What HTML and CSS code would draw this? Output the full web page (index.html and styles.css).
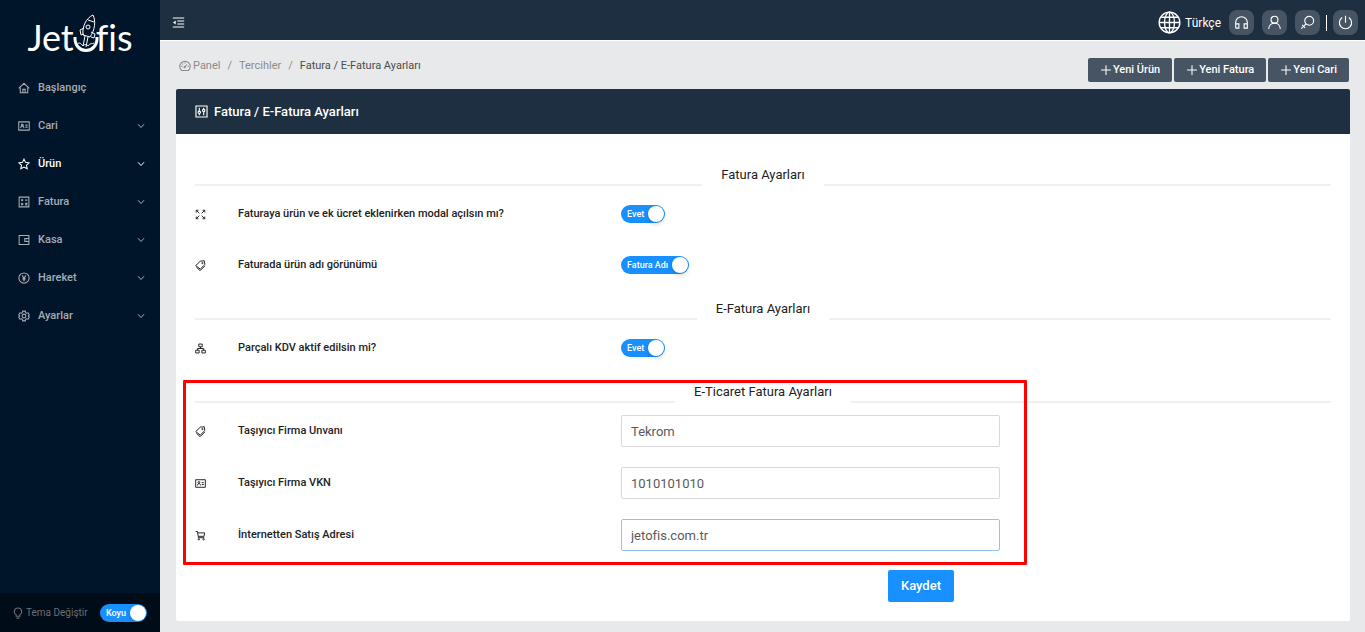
FILE: index.html
```html
<!DOCTYPE html>
<html lang="tr">
<head>
<meta charset="utf-8">
<title>Fatura / E-Fatura Ayarları</title>
<link rel="stylesheet" href="styles.css">
</head>
<body>
<svg class="sprite" aria-hidden="true">
  <symbol id="i-home" viewBox="0 0 16 16"><path d="M1 8.600 8 1.800l7 6.800M3 7.200v7h10v-7M6.500 14V9.800h3V14"/></symbol>
  <symbol id="i-card" viewBox="0 0 16 16"><path d="M1 2.500h14v11H1zM3.500 10.800c.3-3.600 4.200-3.600 4.500 0M9.800 6.800h3M9.800 9.500h3"/><circle cx="5.700" cy="6.500" r="1.300"/></symbol>
  <symbol id="i-star" viewBox="0 0 16 16"><path d="m8 1.500 2 4.300 4.800.6-3.500 3.200.9 4.700L8 12l-4.200 2.300.9-4.700L1.200 6.400 6 5.800z"/></symbol>
  <symbol id="i-calc" viewBox="0 0 16 16"><path d="M1.500 1.500h13v13h-13zM4 5.500h3M5.500 4v3M9.500 5.500h3M4.200 9.500l2.600 2.600M6.800 9.500l-2.600 2.600M9.500 9.800h3M9.500 11.800h3"/></symbol>
  <symbol id="i-wallet" viewBox="0 0 16 16"><path d="M1.500 2h13v12h-13zM14.500 6H9v4h5.500M11 8h1"/></symbol>
  <symbol id="i-money" viewBox="0 0 16 16"><circle cx="8" cy="8" r="6.800"/><path d="m5.500 4.500 2.500 4 2.500-4M8 8.500v3.700M6 8.500h4M6 10.300h4"/></symbol>
  <symbol id="i-gear" viewBox="0 0 16 16"><path d="m6.300 1.500-.5 2-1.300.8-2-.6L.9 6.500 2.300 8 .9 9.500l1.600 2.800 2-.6 1.300.8.5 2h3.400l.5-2 1.300-.8 2 .6 1.600-2.800L13.700 8l1.400-1.500-1.600-2.800-2 .6-1.300-.8-.5-2z"/><circle cx="8" cy="8" r="2.500"/></symbol>
  <symbol id="i-down" viewBox="0 0 16 16"><path d="m2 4.500 6 6.500 6-6.500"/></symbol>
  <symbol id="i-bulb" viewBox="0 0 16 16"><path d="M5.500 12.200v-2C1.200 7.500 3 1.200 8 1.200s6.800 6.300 2.500 9v2zM6 14.800h4"/></symbol>
  <symbol id="i-fold" viewBox="0 0 16 16"><path d="M1 2.500h14M6.500 6.200H15M6.500 9.800H15M1 13.500h14"/><path class="solid" d="M4.500 5.500v5L1.300 8z"/></symbol>
  <symbol id="i-globe" viewBox="0 0 24 24"><circle cx="12" cy="12" r="10.800"/><ellipse cx="12" cy="12" rx="5.200" ry="10.800"/><path d="M12 1v22M1 12h22M3 6.500h18M3 17.500h18"/></symbol>
  <symbol id="i-headset" viewBox="0 0 16 16"><path d="M1.800 14V8a6.200 6.200 0 0 1 12.400 0v6h-3.400V9.500h3.400M1.800 9.500h3.400V14H1.800"/></symbol>
  <symbol id="i-user" viewBox="0 0 16 16"><circle cx="8" cy="5" r="3.700"/><path d="M1.800 15c.2-8.400 12.200-8.400 12.400 0"/></symbol>
  <symbol id="i-search" viewBox="0 0 16 16"><circle cx="9.800" cy="6.200" r="4.700"/><path d="m6.400 9.500-5 5M2.300 10.500l3.200 3.200"/></symbol>
  <symbol id="i-power" viewBox="0 0 16 16"><path d="M8 .8v7.500M4.500 2.700a6.500 6.500 0 1 0 7 0"/></symbol>
  <symbol id="i-plus" viewBox="0 0 16 16"><path d="M8 1.500v13M1.500 8h13"/></symbol>
  <symbol id="i-dash" viewBox="0 0 16 16"><path d="M3.600 14a7 7 0 1 1 8.800 0zM7.500 9.500l3-3.500M8 3v1.500M3 8.500h1.500M11.500 8.500H13M4.500 4.700l1 1"/><circle cx="7.500" cy="9.500" r=".8"/></symbol>
  <symbol id="i-control" viewBox="0 0 16 16"><path d="M1.200 1.200h13.600v13.600H1.200zM5.300 3.500v4M5.300 10.500v2M10.700 3.500v1.800M10.700 8.300v4.200"/><circle cx="5.300" cy="9" r="1.500"/><circle cx="10.700" cy="6.800" r="1.500"/></symbol>
  <symbol id="i-arrows" viewBox="0 0 16 16"><path d="m2 2 4.300 4.300M14 2 9.700 6.300M2 14l4.300-4.300M14 14 9.700 9.700M1.800 5V1.800H5M11 1.800h3.200V5M1.800 11v3.200H5M11 14.200h3.200V11"/></symbol>
  <symbol id="i-tags" viewBox="0 0 16 16"><path d="m1 8.200 6.700-6.500 5.800-.6.800 5.500-6.600 6.600zM2 10.500l5.500 5 7-7"/><circle cx="10.800" cy="4.500" r=".9"/></symbol>
  <symbol id="i-tree" viewBox="0 0 16 16"><path d="M5.500 1.500h5v4h-5zM1 10.500h5v4H1zM10 10.500h5v4h-5zM8 5.500V8M3.500 10.500V8h9v2.500"/></symbol>
  <symbol id="i-cart" viewBox="0 0 16 16"><path d="M1 2.200h2.500l1.500 9h8.500M4 4.200h10l-.8 5H5"/><circle cx="5.500" cy="13.500" r="1"/><circle cx="12.500" cy="13.500" r="1"/></symbol>
</svg>

<div class="app">
  <aside class="sidebar">
    <a class="logo" href="#" aria-label="Jetofis">
      <span>Jet</span>
      <svg class="rocket" viewBox="0 0 26 40" aria-hidden="true">
        <path class="bowl" d="M2 24c-1 18 23 18 22 0"/>
        <path d="M10 22C9 14 13 5 20 2c3 6 2 15-3 22zM15 7l6 2M11 15l-4 2 1 5 3-1M18 19l4 2-1 4-3-1M12 23l-2 10M15 24l-2 10M4 32c2-4 4-1 6 1 1-2 4-2 5 0 2-3 4-2 6-3"/>
        <circle cx="15" cy="14" r="2"/>
      </svg>
      <span>fis</span>
    </a>
    <nav class="menu">
      <a href="#"><svg class="icon"><use href="#i-home"/></svg><span>Başlangıç</span></a>
      <a href="#"><svg class="icon"><use href="#i-card"/></svg><span>Cari</span><svg class="icon arrow"><use href="#i-down"/></svg></a>
      <a href="#" class="active"><svg class="icon"><use href="#i-star"/></svg><span>Ürün</span><svg class="icon arrow"><use href="#i-down"/></svg></a>
      <a href="#"><svg class="icon"><use href="#i-calc"/></svg><span>Fatura</span><svg class="icon arrow"><use href="#i-down"/></svg></a>
      <a href="#"><svg class="icon"><use href="#i-wallet"/></svg><span>Kasa</span><svg class="icon arrow"><use href="#i-down"/></svg></a>
      <a href="#"><svg class="icon"><use href="#i-money"/></svg><span>Hareket</span><svg class="icon arrow"><use href="#i-down"/></svg></a>
      <a href="#"><svg class="icon"><use href="#i-gear"/></svg><span>Ayarlar</span><svg class="icon arrow"><use href="#i-down"/></svg></a>
    </nav>
    <div class="theme">
      <svg class="icon"><use href="#i-bulb"/></svg>
      <label for="theme">Tema Değiştir</label>
      <span class="switch"><input id="theme" type="checkbox" role="switch" checked><span>Koyu</span></span>
    </div>
  </aside>

  <div class="content">
    <header class="topbar">
      <button class="plain" type="button" aria-label="Menü"><svg class="icon"><use href="#i-fold"/></svg></button>
      <div class="tools">
        <button class="lang" type="button"><svg class="icon"><use href="#i-globe"/></svg>Türkçe</button>
        <button class="tool" type="button" aria-label="Destek"><svg class="icon"><use href="#i-headset"/></svg></button>
        <button class="tool" type="button" aria-label="Hesap"><svg class="icon"><use href="#i-user"/></svg></button>
        <button class="tool" type="button" aria-label="Ara"><svg class="icon"><use href="#i-search"/></svg></button>
        <span class="sep"></span>
        <button class="tool" type="button" aria-label="Çıkış"><svg class="icon"><use href="#i-power"/></svg></button>
      </div>
    </header>

    <main class="page">
      <div class="heading">
        <nav class="crumbs">
          <a href="#"><svg class="icon"><use href="#i-dash"/></svg>Panel</a><span class="slash">/</span><a href="#">Tercihler</a><span class="slash">/</span><span class="current">Fatura / E-Fatura Ayarları</span>
        </nav>
        <div class="actions">
          <button type="button"><svg class="icon"><use href="#i-plus"/></svg>Yeni Ürün</button>
          <button type="button"><svg class="icon"><use href="#i-plus"/></svg>Yeni Fatura</button>
          <button type="button"><svg class="icon"><use href="#i-plus"/></svg>Yeni Cari</button>
        </div>
      </div>

      <form class="panel">
        <h1><svg class="icon"><use href="#i-control"/></svg>Fatura / E-Fatura Ayarları</h1>
        <div class="body">
          <section>
            <h2>Fatura Ayarları</h2>
            <div class="row">
              <svg class="icon"><use href="#i-arrows"/></svg>
              <label for="modal">Faturaya ürün ve ek ücret eklenirken modal açılsın mı?</label>
              <span class="switch"><input id="modal" type="checkbox" role="switch" checked><span>Evet</span></span>
            </div>
            <div class="row">
              <svg class="icon"><use href="#i-tags"/></svg>
              <label for="name">Faturada ürün adı görünümü</label>
              <span class="switch"><input id="name" type="checkbox" role="switch" checked><span>Fatura Adı</span></span>
            </div>
          </section>
          <section>
            <h2>E-Fatura Ayarları</h2>
            <div class="row">
              <svg class="icon"><use href="#i-tree"/></svg>
              <label for="kdv">Parçalı KDV aktif edilsin mi?</label>
              <span class="switch"><input id="kdv" type="checkbox" role="switch" checked><span>Evet</span></span>
            </div>
          </section>
          <section class="marked">
            <h2>E-Ticaret Fatura Ayarları</h2>
            <div class="row">
              <svg class="icon"><use href="#i-tags"/></svg>
              <label for="carrier">Taşıyıcı Firma Unvanı</label>
              <input class="field" id="carrier" type="text" value="Tekrom">
            </div>
            <div class="row">
              <svg class="icon"><use href="#i-card"/></svg>
              <label for="vkn">Taşıyıcı Firma VKN</label>
              <input class="field" id="vkn" type="text" value="1010101010">
            </div>
            <div class="row">
              <svg class="icon"><use href="#i-cart"/></svg>
              <label for="site">İnternetten Satış Adresi</label>
              <input class="field highlighted" id="site" type="text" value="jetofis.com.tr">
            </div>
          </section>
          <div class="submit"><button type="submit">Kaydet</button></div>
        </div>
      </form>
    </main>
  </div>
</div>
</body>
</html>
```
FILE: styles.css
```css
*, *::before, *::after { box-sizing: border-box; }
body {
  margin: 0;
  background: #e8e9eb;
  color: #222;
  font: 11px/22px Roboto, "Liberation Sans", sans-serif;
}
button, input { font: inherit; }
button { border: 0; padding: 0; color: #fff; background: none; cursor: pointer; }
a { color: inherit; text-decoration: none; }
h1, h2 { margin: 0; font-weight: 500; }
.sprite { position: absolute; width: 0; height: 0; }
.icon {
  flex: none;
  width: 12px;
  height: 12px;
  fill: none;
  stroke: currentColor;
  stroke-width: 1.4;
}
.solid { fill: currentColor; stroke: none; }

.app { display: flex; min-height: 100vh; }
.sidebar {
  flex: none;
  display: flex;
  flex-direction: column;
  width: 160px;
  background: #001529;
}
.logo {
  display: flex;
  justify-content: center;
  align-items: flex-end;
  height: 69px;
  padding-bottom: 12px;
  color: #fff;
  font: 36px/40px Lato, sans-serif;
}
.rocket { width: 26px; height: 40px; margin: 0 -3px 4px -1px; fill: none; stroke: #fff; stroke-width: 1; }
.bowl { stroke-width: 3; }
.menu { flex: 1; font-size: 12px; font-weight: 500; }
.menu a { display: flex; align-items: center; height: 38px; padding: 0 15px 0 18px; color: #a6adb4; }
.menu span { flex: 1; margin-left: 8px; font-size: 11px; }
.menu .active { color: #fff; }
.menu .arrow { width: 8px; height: 8px; stroke-width: 2; }
.theme {
  display: flex;
  align-items: center;
  height: 39px;
  padding: 0 13px 0 12px;
  background: #000c17;
  color: #6c6f73;
  font-size: 10px;
}
.theme label { flex: 1; margin-left: 2px; }

.switch { position: relative; display: inline-flex; justify-self: start; height: 18px; }
.switch input {
  position: absolute;
  inset: 0;
  width: 100%;
  height: 100%;
  margin: 0;
  appearance: none;
  border-radius: 9px;
  background: #1890ff;
}
.switch input::after {
  content: "";
  position: absolute;
  top: 1px;
  right: 1px;
  width: 16px;
  height: 16px;
  border-radius: 50%;
  background: #fff;
  box-shadow: 0 2px 4px rgba(0, 35, 11, .2);
}
.switch span {
  position: relative;
  padding: 0 21px 0 6px;
  color: #fff;
  font-size: 9px;
  font-weight: 500;
  line-height: 18px;
  pointer-events: none;
}

.content { flex: 1; min-width: 0; }
.topbar {
  display: flex;
  justify-content: space-between;
  align-items: center;
  height: 41px;
  padding: 5px 7px 0 12px;
  border-bottom: 1px solid #fff;
  background: #1d2f40;
  color: #fff;
}
.plain { display: flex; }
.plain .icon { width: 13px; height: 13px; }
.tools { display: flex; align-items: center; gap: 8px; }
.lang { display: flex; align-items: center; gap: 4px; font-size: 12px; }
.lang .icon { width: 23px; height: 23px; }
.tool {
  display: grid;
  place-items: center;
  width: 25px;
  height: 25px;
  border-radius: 8px;
  background: #465463;
}
.tool .icon { width: 15px; height: 15px; stroke-width: 1.2; }
.sep { width: 1px; height: 16px; margin: 0 -2px; background: #fff; }

.page { padding: 17px 15px 11px 16px; }
.heading { display: flex; justify-content: space-between; margin-bottom: 7px; padding: 0 1px 0 3px; }
.crumbs { display: flex; height: 16px; line-height: 16px; color: #8a8b8d; }
.crumbs a { display: flex; align-items: center; gap: 2px; }
.crumbs .slash { margin: 0 7px; }
.crumbs .current { color: #4a4b4d; }
.actions { display: flex; gap: 2px; }
.actions button {
  display: flex;
  align-items: center;
  gap: 1px;
  height: 24px;
  padding: 0 12px;
  border-radius: 2px;
  background: #465463;
  font-weight: 500;
}

.panel { background: #fff; border-radius: 2px; }
.panel h1 {
  display: flex;
  align-items: center;
  gap: 6px;
  height: 45px;
  padding: 0 19px;
  border-radius: 2px 2px 0 0;
  background: #1d2f40;
  color: #fff;
  font-size: 13px;
}
.panel h1 .icon { width: 13px; height: 13px; }
.body { padding: 30px 19px 19px; }
section { margin-bottom: 17px; }
h2 {
  display: flex;
  align-items: flex-end;
  margin-bottom: 12px;
  font-size: 13px;
  font-weight: 400;
  line-height: 22px;
}
h2::before, h2::after { content: ""; flex: 1; border-top: 2px solid #f0f0f0; }
h2::before { margin-right: 19px; }
h2::after { margin-left: 19px; }
.row {
  display: grid;
  grid-template-columns: 43fr 383fr 379fr 331fr;
  align-items: center;
  height: 32px;
}
.row + .row { margin-top: 19px; }
.row .icon { width: 11px; height: 11px; }
.row label { font-weight: 500; }
.field {
  width: 100%;
  height: 32px;
  padding: 0 9px;
  border: 1px solid #d9d9d9;
  border-radius: 2px;
  background: #fff;
  color: #5a5a5a;
  font-size: 13px;
}
.field.highlighted { border-color: #91c4ef; }
.marked { position: relative; margin-bottom: 19px; }
.marked .row + .row { margin-top: 20px; }
.marked::after {
  content: "";
  position: absolute;
  top: -1px;
  bottom: -14px;
  left: -12px;
  width: 74.3%;
  border: 3px solid #f00;
  border-radius: 1px;
  pointer-events: none;
}
.submit { padding-left: 61%; }
.submit button {
  display: block;
  height: 32px;
  padding: 0 13px;
  border-radius: 2px;
  background: #1890ff;
  font-size: 13px;
  font-weight: 500;
}
```
